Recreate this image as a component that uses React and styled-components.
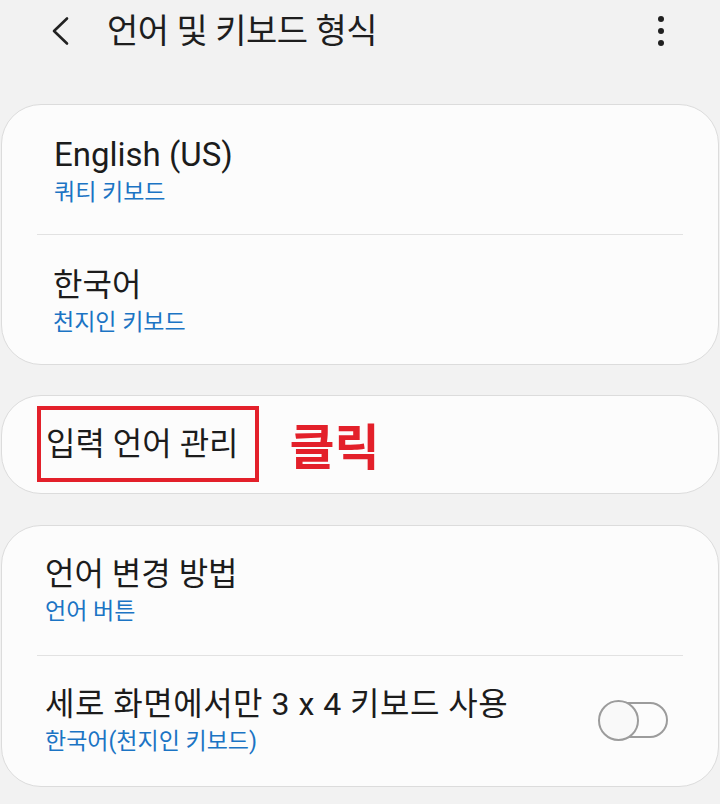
import React from 'react'
import styled, { createGlobalStyle } from 'styled-components'

const GlobalStyle = createGlobalStyle`
  html, body {
    margin: 0;
    padding: 0;
    background: #f2f2f2;
  }
  body {
    font-family: "Roboto", "Noto Sans CJK KR", sans-serif;
    color: #1c1c1c;
  }
`

const Page = styled.div`
  width: 720px;
  height: 804px;
  box-sizing: border-box;
  padding: 0 1px;
  background: #f2f2f2;
  display: flex;
  flex-direction: column;
  overflow: hidden;
`

const Header = styled.header`
  height: 62px;
  display: flex;
  align-items: center;
  padding: 0 50px 0 47px;
`

const Back = styled.button`
  border: 0;
  background: none;
  padding: 0;
  width: 24px;
  height: 32px;
  display: flex;
  align-items: center;
  justify-content: center;
  cursor: pointer;
`

const Title = styled.h1`
  margin: 0 0 0 35px;
  flex: 1;
  font-size: 34px;
  font-weight: 400;
  letter-spacing: -0.5px;
  line-height: 42px;
  color: #1e1e1e;
`

const More = styled.button`
  border: 0;
  background: none;
  padding: 0;
  width: 16px;
  display: flex;
  flex-direction: column;
  align-items: center;
  gap: 5.5px;
  cursor: pointer;
`

const Dot = styled.span`
  width: 6.5px;
  height: 6.5px;
  border-radius: 50%;
  background: #202020;
`

const Card = styled.section`
  margin-top: ${p => p.$gap}px;
  background: #fcfcfc;
  border: 1px solid #dcdcdc;
  border-radius: 40px;
  overflow: hidden;
`

const Row = styled.div`
  display: flex;
  align-items: center;
  justify-content: space-between;
  padding: ${p => p.$top}px 50px ${p => p.$bottom}px ${p => p.$left}px;
`

const Texts = styled.div`
  display: flex;
  flex-direction: column;
`

const ItemTitle = styled.div`
  font-size: ${p => p.$size || 32}px;
  letter-spacing: ${p => p.$spacing || 0}px;
  line-height: 40px;
  color: #1c1c1c;
  white-space: nowrap;
`

const ItemSub = styled.div`
  margin-top: 3px;
  font-size: 23px;
  line-height: 30px;
  color: #1b74c4;
  white-space: nowrap;
`

const Divider = styled.hr`
  margin: 0 35px;
  border: 0;
  border-top: 1px solid #e2e2e2;
  height: 0;
`

const ManageRow = styled.div`
  display: flex;
  align-items: center;
  padding: 10px 0 11px 35px;
`

const Highlight = styled.div`
  border: 4px solid #e3202a;
  padding: 14px 16px 14px 5px;
`

const Note = styled.span`
  margin-left: 31px;
  font-size: 49px;
  font-weight: 700;
  line-height: 52px;
  color: #e3202a;
  font-family: "Noto Sans CJK KR", sans-serif;
`

const Switch = styled.div`
  position: relative;
  width: 70px;
  height: 41px;
  flex-shrink: 0;
`

const Track = styled.span`
  position: absolute;
  left: 6px;
  top: 2px;
  width: 64px;
  height: 36px;
  box-sizing: border-box;
  border: 2.5px solid #9c9c9c;
  border-radius: 18px;
`

const Thumb = styled.span`
  position: absolute;
  left: 0;
  top: 0;
  width: 41px;
  height: 41px;
  box-sizing: border-box;
  border: 2.5px solid #9c9c9c;
  border-radius: 50%;
  background: #f9f9f9;
`

function Item({ title, sub, left, top, bottom, size, spacing, children }) {
  return (
    <Row $left={left} $top={top} $bottom={bottom}>
      <Texts>
        <ItemTitle $size={size} $spacing={spacing}>{title}</ItemTitle>
        <ItemSub>{sub}</ItemSub>
      </Texts>
      {children}
    </Row>
  )
}

export default function App() {
  return (
    <Page>
      <GlobalStyle />
      <Header>
        <Back aria-label="뒤로">
          <svg width="20" height="30" viewBox="0 0 20 30">
            <polyline
              points="17,2.5 4,15 17,27.5"
              fill="none"
              stroke="#222"
              strokeWidth="2.6"
              strokeLinecap="round"
              strokeLinejoin="round"
            />
          </svg>
        </Back>
        <Title>언어 및 키보드 형식</Title>
        <More aria-label="더보기">
          <Dot />
          <Dot />
          <Dot />
        </More>
      </Header>

      <Card $gap={42}>
        <Item title="English (US)" sub="쿼티 키보드" left={52} top={30} bottom={26} size={33} />
        <Divider />
        <Item title="한국어" sub="천지인 키보드" left={51} top={30} bottom={26} />
      </Card>

      <Card $gap={30}>
        <ManageRow>
          <Highlight>
            <ItemTitle>입력 언어 관리</ItemTitle>
          </Highlight>
          <Note>클릭</Note>
        </ManageRow>
      </Card>

      <Card $gap={31}>
        <Item title="언어 변경 방법" sub="언어 버튼" left={43} top={28} bottom={28} />
        <Divider />
        <Item
          title="세로 화면에서만 3 x 4 키보드 사용"
          sub="한국어(천지인 키보드)"
          left={43}
          top={28}
          bottom={29}
          spacing={0.5}
        >
          <Switch>
            <Track />
            <Thumb />
          </Switch>
        </Item>
      </Card>
    </Page>
  )
}
